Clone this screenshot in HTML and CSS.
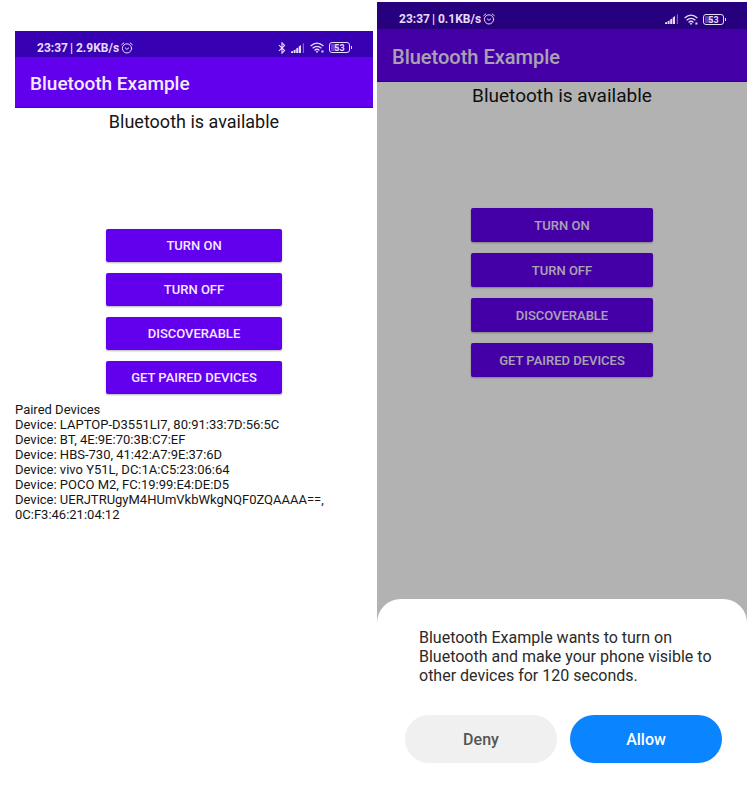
FILE: index.html
```html
<!DOCTYPE html>
<html lang="en">
<head>
<meta charset="utf-8">
<meta name="viewport" content="width=device-width, initial-scale=1">
<title>Bluetooth Example</title>
<link rel="stylesheet" href="styles.css">
</head>
<body>
<svg class="sprite" aria-hidden="true">
  <symbol id="alarm" viewBox="0 0 12 12">
    <g fill="none" stroke="currentColor" stroke-linecap="round">
      <circle cx="6" cy="6.4" r="4.6"/>
      <path d="M.7 2.7 2.8.9M11.3 2.7 9.2.9M4.3 5.9 6 7.4 7.7 5.9"/>
    </g>
  </symbol>
  <symbol id="bluetooth" viewBox="0 0 8 12">
    <path d="M1 3.2 6.6 8.6 4 11.2V.8l2.6 2.6L1 8.8" fill="none" stroke="currentColor" stroke-width="1.1"/>
  </symbol>
  <symbol id="signal" viewBox="0 0 14 10">
    <path d="M0 10V8.6L2 8v2zM2.6 10V7.2l2-.8V10zM5.2 10V5.4l2-.9V10zM7.8 10V3.4l2.2-1.4V10z" fill="currentColor"/>
    <path d="M11.8 10V.8L13 0v10z" fill="currentColor" opacity=".45"/>
  </symbol>
  <symbol id="wifi" viewBox="0 0 14 11">
    <path d="M.6 4Q7-1.8 13.4 4M2.6 6.3Q7 2.4 11.4 6.3M4.6 8.4Q7 6.2 9.4 8.4" fill="none" stroke="currentColor" stroke-width="1.3"/>
    <path d="M5.6 9.6Q7 8.6 8.4 9.6L7 11zM11.4 8.6h2v2h-2z" fill="currentColor"/>
  </symbol>
</svg>
<main class="screens">
  <section class="phone phone-paired">
    <div class="status">
      <span class="clock">23:37</span><span class="rate">| 2.9KB/s</span>
      <svg class="icon-alarm"><use href="#alarm"/></svg>
      <span class="indicators">
        <svg class="icon-bluetooth"><use href="#bluetooth"/></svg>
        <svg class="icon-signal"><use href="#signal"/></svg>
        <svg class="icon-wifi"><use href="#wifi"/></svg>
        <span class="battery">53</span>
      </span>
    </div>
    <header class="app-bar"><h1>Bluetooth Example</h1></header>
    <p class="availability">Bluetooth is available</p>
    <div class="actions">
      <button type="button">TURN ON</button>
      <button type="button">TURN OFF</button>
      <button type="button">DISCOVERABLE</button>
      <button type="button">GET PAIRED DEVICES</button>
    </div>
    <div class="devices">
      <p>Paired Devices</p>
      <p>Device: LAPTOP-D3551LI7, 80:91:33:7D:56:5C</p>
      <p>Device: BT, 4E:9E:70:3B:C7:EF</p>
      <p>Device: HBS-730, 41:42:A7:9E:37:6D</p>
      <p>Device: vivo Y51L, DC:1A:C5:23:06:64</p>
      <p>Device: POCO M2, FC:19:99:E4:DE:D5</p>
      <p>Device: UERJTRUgyM4HUmVkbWkgNQF0ZQAAAA==, 0C:F3:46:21:04:12</p>
    </div>
  </section>

  <section class="phone phone-prompt">
    <div class="status">
      <span class="clock">23:37</span><span class="rate">| 0.1KB/s</span>
      <svg class="icon-alarm"><use href="#alarm"/></svg>
      <span class="indicators">
        <svg class="icon-signal"><use href="#signal"/></svg>
        <svg class="icon-wifi"><use href="#wifi"/></svg>
        <span class="battery">53</span>
      </span>
    </div>
    <header class="app-bar"><h1>Bluetooth Example</h1></header>
    <p class="availability">Bluetooth is available</p>
    <div class="actions">
      <button type="button">TURN ON</button>
      <button type="button">TURN OFF</button>
      <button type="button">DISCOVERABLE</button>
      <button type="button">GET PAIRED DEVICES</button>
    </div>
    <div class="scrim"></div>
    <div class="sheet" role="dialog" aria-labelledby="prompt-text">
      <p id="prompt-text">Bluetooth Example wants to turn on Bluetooth and make your phone visible to other devices for 120 seconds.</p>
      <div class="choices">
        <button type="button" class="deny">Deny</button>
        <button type="button" class="allow">Allow</button>
      </div>
    </div>
  </section>
</main>
</body>
</html>
```
FILE: styles.css
```css
* { box-sizing: border-box; }

body {
  margin: 0;
  background: #fff;
  color: #151515;
  font-family: Roboto, "Liberation Sans", sans-serif;
}

h1, p { margin: 0; font-weight: 400; }

button {
  border: 0;
  padding: 0;
  font-family: inherit;
  font-weight: 500;
}

.sprite { display: none; }

.screens {
  display: grid;
  grid-template-columns: 358fr 370fr;
  gap: 4px;
  padding-left: 15px;
  min-height: 100vh;
}

.phone {
  position: relative;
  display: flex;
  flex-direction: column;
}

.phone-paired { margin-top: 31px; }
.phone-prompt { margin-top: 2px; }

.status {
  display: flex;
  align-items: center;
  gap: 2px;
  height: 26px;
  padding: 7px 21px 0 22px;
  background: #3700b3;
  color: #e6dcfa;
  font-size: 12px;
  font-weight: 700;
}

.indicators {
  display: flex;
  align-items: center;
  gap: 5px;
  margin-left: auto;
}

.icon-alarm { width: 12px; height: 12px; }
.icon-bluetooth { width: 8px; height: 12px; }
.icon-signal { width: 14px; height: 10px; }
.icon-wifi { width: 14px; height: 11px; }

.battery {
  position: relative;
  width: 21px;
  height: 11px;
  margin-right: 2px;
  padding: 1px;
  border: 1px solid;
  border-radius: 3px;
  background: linear-gradient(90deg, rgba(230, 220, 250, .3) 50%, transparent 50%) content-box;
  font-size: 9px;
  line-height: 8px;
  text-align: center;
}

.battery::after {
  content: "";
  position: absolute;
  top: 3px;
  right: -3px;
  width: 1px;
  height: 3px;
  background: currentColor;
}

.app-bar {
  display: flex;
  align-items: center;
  height: 51px;
  padding: 3px 0 0 15px;
  background: #6200ee;
  border-bottom: 1px solid #4b00b8;
  color: #f3eafe;
}

.app-bar h1 {
  font-size: 19px;
  font-weight: 500;
}

.availability {
  padding-top: 3px;
  font-size: 18px;
  line-height: 22px;
  text-align: center;
}

.actions {
  display: grid;
  gap: 11px;
  width: 49%;
  margin: 96px auto 0;
}

.actions button {
  height: 33px;
  border-radius: 2px;
  background: #6200ee;
  box-shadow: 0 1px 2px rgba(0, 0, 0, .3);
  color: #f3eafe;
  font-size: 13px;
}

.devices {
  margin-top: 8px;
  padding-right: 40px;
  font-size: 13px;
  line-height: 15px;
}

.phone-prompt .status {
  position: relative;
  z-index: 1;
  height: 27px;
  background: #26007d;
}

.phone-prompt .app-bar { height: 53px; }
.phone-prompt .app-bar h1 { font-size: 20px; }
.phone-prompt .availability { font-size: 19px; }
.phone-prompt .actions { margin-top: 101px; }
.phone-prompt .actions button { height: 34px; }

.scrim {
  position: absolute;
  inset: 0;
  background: rgba(0, 0, 0, .3);
}

.sheet {
  position: relative;
  margin-top: auto;
  padding: 29px 25px 27px 28px;
  border-radius: 24px 24px 0 0;
  background: #fff;
}

.sheet p {
  padding-left: 14px;
  color: #2a2a2a;
  font-size: 16px;
  line-height: 19px;
}

.choices {
  display: grid;
  grid-template-columns: 1fr 1fr;
  gap: 13px;
  margin-top: 30px;
}

.choices button {
  height: 48px;
  border-radius: 24px;
  font-size: 16px;
}

.choices .deny { background: #f0f0f0; color: #555; }
.choices .allow { background: #0a84ff; color: #fff; }
```
